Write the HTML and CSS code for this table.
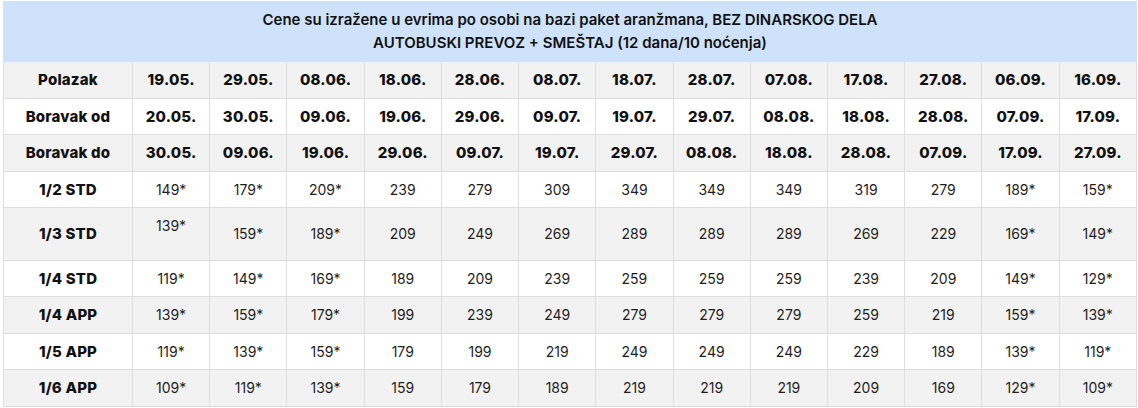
FILE: index.html
```html
<!DOCTYPE html>
<html lang="sr">
<head>
<meta charset="utf-8">
<link rel="stylesheet" href="styles.css">
</head>
<body>
<table class="price">
<colgroup>
<col class="c-label">
<col span="13">
</colgroup>
<thead>
<tr><th colspan="14" class="title">Cene su izražene u evrima po osobi na bazi paket aranžmana, BEZ DINARSKOG DELA<br>AUTOBUSKI PREVOZ + SMEŠTAJ (12 dana/10 noćenja)</th></tr>
</thead>
<tbody>
<tr class="odd bold"><th>Polazak</th><td>19.05.</td><td>29.05.</td><td>08.06.</td><td>18.06.</td><td>28.06.</td><td>08.07.</td><td>18.07.</td><td>28.07.</td><td>07.08.</td><td>17.08.</td><td>27.08.</td><td>06.09.</td><td>16.09.</td></tr>
<tr class="even bold"><th>Boravak od</th><td>20.05.</td><td>30.05.</td><td>09.06.</td><td>19.06.</td><td>29.06.</td><td>09.07.</td><td>19.07.</td><td>29.07.</td><td>08.08.</td><td>18.08.</td><td>28.08.</td><td>07.09.</td><td>17.09.</td></tr>
<tr class="odd bold"><th>Boravak do</th><td>30.05.</td><td>09.06.</td><td>19.06.</td><td>29.06.</td><td>09.07.</td><td>19.07.</td><td>29.07.</td><td>08.08.</td><td>18.08.</td><td>28.08.</td><td>07.09.</td><td>17.09.</td><td>27.09.</td></tr>
<tr class="even"><th>1/2 STD</th><td>149*</td><td>179*</td><td>209*</td><td>239</td><td>279</td><td>309</td><td>349</td><td>349</td><td>349</td><td>319</td><td>279</td><td>189*</td><td>159*</td></tr>
<tr class="odd"><th>1/3 STD</th><td>139*<br>&nbsp;</td><td>159*</td><td>189*</td><td>209</td><td>249</td><td>269</td><td>289</td><td>289</td><td>289</td><td>269</td><td>229</td><td>169*</td><td>149*</td></tr>
<tr class="even"><th>1/4 STD</th><td>119*</td><td>149*</td><td>169*</td><td>189</td><td>209</td><td>239</td><td>259</td><td>259</td><td>259</td><td>239</td><td>209</td><td>149*</td><td>129*</td></tr>
<tr class="odd"><th>1/4 APP</th><td>139*</td><td>159*</td><td>179*</td><td>199</td><td>239</td><td>249</td><td>279</td><td>279</td><td>279</td><td>259</td><td>219</td><td>159*</td><td>139*</td></tr>
<tr class="even"><th>1/5 APP</th><td>119*</td><td>139*</td><td>159*</td><td>179</td><td>199</td><td>219</td><td>249</td><td>249</td><td>249</td><td>229</td><td>189</td><td>139*</td><td>119*</td></tr>
<tr class="odd"><th>1/6 APP</th><td>109*</td><td>119*</td><td>139*</td><td>159</td><td>179</td><td>189</td><td>219</td><td>219</td><td>219</td><td>209</td><td>169</td><td>129*</td><td>109*</td></tr>
</tbody>
</table>
</body>
</html>
```
FILE: styles.css
```css
html, body {
  margin: 0;
  padding: 0;
  background: #ffffff;
}
body {
  padding: 1px 1px 0 3px;
  font-family: Inter, "Noto Sans", sans-serif;
  color: #1c1c1c;
}
.price {
  width: 1134px;
  border-collapse: collapse;
  table-layout: fixed;
  font-size: 14px;
}
.c-label {
  width: 129px;
}
.price th,
.price td {
  border: 1px solid #dedede;
  text-align: center;
  vertical-align: middle;
  padding: 10px 2px 9.5px;
  line-height: 16px;
}
.price .title {
  background: #cfe2fc;
  border-color: #cfe2fc;
  font-weight: 600;
  font-size: 15px;
  line-height: 23px;
  padding: 6px 4px 7px;
  color: #111111;
}
.price tbody th {
  font-weight: 800;
  font-size: 15px;
  letter-spacing: 0.2px;
  color: #111111;
}
.price .bold td {
  font-weight: 800;
  font-size: 15px;
  letter-spacing: 0.2px;
  color: #111111;
}
.price td {
  font-weight: 400;
  color: #1e1e1e;
}
.odd {
  background: #f2f2f2;
}
.even {
  background: #ffffff;
}
```
